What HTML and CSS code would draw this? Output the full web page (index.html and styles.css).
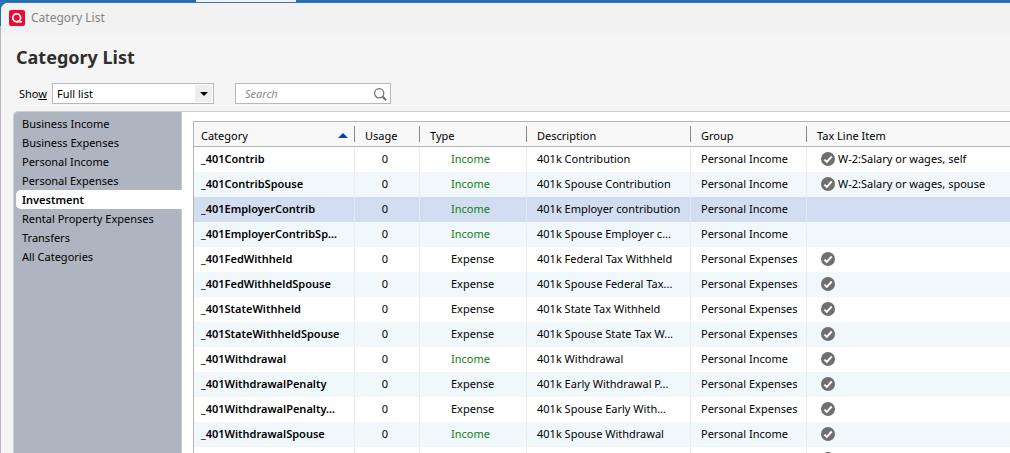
FILE: index.html
```html
<!DOCTYPE html>
<html lang="en">
    <head>
        <title>Category List</title>
        <meta charset="utf-8">

        <link rel="stylesheet" href="styles.css">
    </head>

    <body>
        <svg class="symbols" width="0" height="0">
            <symbol id="check" viewBox="0 0 14 14">
                <circle cx="7" cy="7" r="7" fill="#6f6f71"/>
                <path d="M3.4 7.6l2.4 2.3 4.9-5.4" fill="none" stroke="#fff" stroke-width="2"/>
            </symbol>
        </svg>

        <div class="desktop-bar"><div class="desktop-tab"></div></div>

        <div class="window">
            <div class="titlebar">
                <svg class="logo" viewBox="0 0 16 16">
                    <rect width="16" height="16" rx="2" fill="#ee0a35"/>
                    <circle cx="7.7" cy="7.8" r="3.9" fill="none" stroke="#fff" stroke-width="1.7"/>
                    <path d="M8 10.9h5v1.6H7z" fill="#fff"/>
                </svg>
                <span>Category List</span>
            </div>

            <h1>Category List</h1>

            <div class="toolbar">
                <label for="show">Sho<u>w</u></label>
                <div class="select">
                    <select id="show">
                        <option>Full list</option>
                    </select>
                    <span class="select-arrow"></span>
                </div>
                <div class="search">
                    <input type="text" placeholder="Search" aria-label="Search">
                    <svg class="search-icon" viewBox="0 0 13 13" fill="none" stroke="#707070">
                        <circle cx="5.2" cy="5.2" r="4.6" stroke-width="1.2"/>
                        <path d="M8.5 8.5l3.7 3.7" stroke-width="2"/>
                    </svg>
                </div>
            </div>

            <div class="content">
                <nav class="sidebar">
                    <a href="#">Business Income</a>
                    <a href="#">Business Expenses</a>
                    <a href="#">Personal Income</a>
                    <a href="#">Personal Expenses</a>
                    <a href="#" class="active">Investment</a>
                    <a href="#">Rental Property Expenses</a>
                    <a href="#">Transfers</a>
                    <a href="#">All Categories</a>
                </nav>

                <div class="list">
                    <table>
                        <colgroup>
                            <col class="col-category">
                            <col class="col-usage">
                            <col class="col-type">
                            <col class="col-description">
                            <col class="col-group">
                            <col>
                        </colgroup>
                        <thead>
                            <tr>
                                <th><div class="sorted">Category <span class="sort-arrow"></span></div></th>
                                <th>Usage</th>
                                <th>Type</th>
                                <th>Description</th>
                                <th>Group</th>
                                <th>Tax Line Item</th>
                            </tr>
                        </thead>
                        <tbody>
                            <tr><td>_401Contrib</td><td>0</td><td class="income">Income</td><td>401k Contribution</td><td>Personal Income</td><td><svg class="check"><use href="#check"/></svg>W-2:Salary or wages, self</td></tr>
                            <tr><td>_401ContribSpouse</td><td>0</td><td class="income">Income</td><td>401k Spouse Contribution</td><td>Personal Income</td><td><svg class="check"><use href="#check"/></svg>W-2:Salary or wages, spouse</td></tr>
                            <tr class="selected"><td>_401EmployerContrib</td><td>0</td><td class="income">Income</td><td>401k Employer contribution</td><td>Personal Income</td><td></td></tr>
                            <tr><td>_401EmployerContribSp...</td><td>0</td><td class="income">Income</td><td>401k Spouse Employer c...</td><td>Personal Income</td><td></td></tr>
                            <tr><td>_401FedWithheld</td><td>0</td><td>Expense</td><td>401k Federal Tax Withheld</td><td>Personal Expenses</td><td><svg class="check"><use href="#check"/></svg></td></tr>
                            <tr><td>_401FedWithheldSpouse</td><td>0</td><td>Expense</td><td>401k Spouse Federal Tax...</td><td>Personal Expenses</td><td><svg class="check"><use href="#check"/></svg></td></tr>
                            <tr><td>_401StateWithheld</td><td>0</td><td>Expense</td><td>401k State Tax Withheld</td><td>Personal Expenses</td><td><svg class="check"><use href="#check"/></svg></td></tr>
                            <tr><td>_401StateWithheldSpouse</td><td>0</td><td>Expense</td><td>401k Spouse State Tax W...</td><td>Personal Expenses</td><td><svg class="check"><use href="#check"/></svg></td></tr>
                            <tr><td>_401Withdrawal</td><td>0</td><td class="income">Income</td><td>401k Withdrawal</td><td>Personal Income</td><td><svg class="check"><use href="#check"/></svg></td></tr>
                            <tr><td>_401WithdrawalPenalty</td><td>0</td><td>Expense</td><td>401k Early Withdrawal P...</td><td>Personal Expenses</td><td><svg class="check"><use href="#check"/></svg></td></tr>
                            <tr><td>_401WithdrawalPenalty...</td><td>0</td><td>Expense</td><td>401k Spouse Early With...</td><td>Personal Expenses</td><td><svg class="check"><use href="#check"/></svg></td></tr>
                            <tr><td>_401WithdrawalSpouse</td><td>0</td><td class="income">Income</td><td>401k Spouse Withdrawal</td><td>Personal Income</td><td><svg class="check"><use href="#check"/></svg></td></tr>
                            <tr><td></td><td></td><td></td><td></td><td></td><td><svg class="check"><use href="#check"/></svg></td></tr>
                        </tbody>
                    </table>
                </div>
            </div>
        </div>
    </body>
</html>
```
FILE: styles.css
```css
*, *::before, *::after{
    box-sizing: border-box;
}

body{
    margin: 0;
    height: 100vh;
    overflow: hidden;
    display: flex;
    flex-direction: column;
    font: 11px/18px "Noto Sans", "Open Sans", sans-serif;
    color: #000;
    background: linear-gradient(#2270b5 26px, #b7b7b9 26px);
}

.symbols{
    position: absolute;
}

.desktop-bar{
    flex: none;
    height: 3px;
    padding-left: 196px;
    border-bottom: 1px solid #3c78a8;
}

.desktop-tab{
    width: 100px;
    height: 2px;
    background: #f0f0f0;
}

.window{
    flex: 1;
    min-height: 0;
    margin-left: 1px;
    display: flex;
    flex-direction: column;
    background: #f5f5f5;
    border-top-left-radius: 7px;
}

.titlebar{
    flex: none;
    display: flex;
    align-items: center;
    gap: 6px;
    height: 30px;
    padding-left: 8px;
    font-size: 12px;
    color: #858585;
    background: #f2f2f2;
    border-top-left-radius: 7px;
}

.logo{
    width: 16px;
    height: 16px;
}

h1{
    margin: 12px 0 0 15px;
    font-size: 18px;
    line-height: 24px;
    font-weight: bold;
    color: #2f2f2f;
}

.toolbar{
    display: flex;
    align-items: center;
    margin: 14px 0 7px 18px;
}

.select{
    position: relative;
    width: 162px;
    margin: 0 21px 0 5px;
}

.select select,
.search input{
    display: block;
    width: 100%;
    height: 21px;
    padding: 0 4px;
    font: inherit;
    color: #000;
    background: #fff;
    border: 1px solid #b9b9b9;
    border-radius: 0;
    appearance: none;
}

.select-arrow{
    position: absolute;
    top: 2px;
    right: 2px;
    width: 17px;
    height: 17px;
    background: #eee;
    pointer-events: none;
}

.select-arrow::after{
    content: "";
    position: absolute;
    top: 7px;
    left: 5px;
    border: 4px solid transparent;
    border-top-color: #000;
    border-bottom: 0;
}

.search{
    position: relative;
    width: 156px;
}

.search input{
    padding: 0 24px 0 9px;
}

.search input::placeholder{
    font-style: italic;
    color: #8a8a8a;
}

.search-icon{
    position: absolute;
    top: 5px;
    right: 4px;
    width: 13px;
    height: 13px;
}

.content{
    flex: 1;
    min-height: 0;
    display: flex;
    margin-left: 12px;
    background: #fff;
    border-top: 1px solid #d0d0d0;
    border-left: 1px solid #d0d0d0;
    border-top-left-radius: 5px;
    overflow: hidden;
}

.sidebar{
    flex: none;
    width: 168px;
    padding: 2px 0 0 2px;
    background: #aeb5c0;
    border-right: 1px solid #c4c8cf;
}

.sidebar a{
    display: block;
    height: 19px;
    padding-left: 6px;
    line-height: 19px;
    color: #000;
    text-decoration: none;
}

.sidebar .active{
    margin-right: -1px;
    font-weight: 600;
    background: #fff;
    border-radius: 5px 0 0 5px;
}

.list{
    flex: 1;
    min-width: 0;
    margin: 9px 0 0 11px;
    border-top: 1px solid #b5b5b5;
    border-left: 1px solid #b5b5b5;
    overflow: hidden;
}

table{
    width: 100%;
    table-layout: fixed;
    border-collapse: separate;
    border-spacing: 0;
}

.col-category{
    width: 161px;
}

.col-usage{
    width: 65px;
}

.col-type{
    width: 107px;
}

.col-description{
    width: 164px;
}

.col-group{
    width: 116px;
}

th, td{
    height: 25px;
    padding: 0 0 2px 10px;
    text-align: left;
    white-space: nowrap;
    border-right: 1px solid #ececec;
}

th{
    padding: 3px 0 0 10px;
    font-weight: normal;
    border-right: 0;
    border-bottom: 1px solid #b5b5b5;
    background: linear-gradient(#8a8a8a, #8a8a8a) no-repeat right 4px / 1px 16px #f8f8f8;
}

th:last-child{
    background: #f8f8f8;
}

td:last-child{
    border-right: 0;
}

th:first-child, td:first-child{
    padding-left: 7px;
}

.sorted{
    display: flex;
    justify-content: space-between;
    align-items: center;
    padding-right: 7px;
}

.sort-arrow{
    border: 5px solid transparent;
    border-top: 0;
    border-bottom-color: #0a3cb4;
}

td:first-child{
    font-weight: 600;
}

td:nth-child(2){
    padding: 0 4px 2px 0;
    text-align: center;
}

td:nth-child(3){
    padding-left: 31px;
}

tbody tr:nth-child(even){
    background: #f0f8fc;
}

tbody .selected{
    background: #d2ddf1;
}

.selected td{
    border-color: #e2e8f4;
}

.income{
    color: #108010;
}

.check{
    width: 14px;
    height: 14px;
    margin: 0 3px 0 4px;
    vertical-align: -3px;
}
```
